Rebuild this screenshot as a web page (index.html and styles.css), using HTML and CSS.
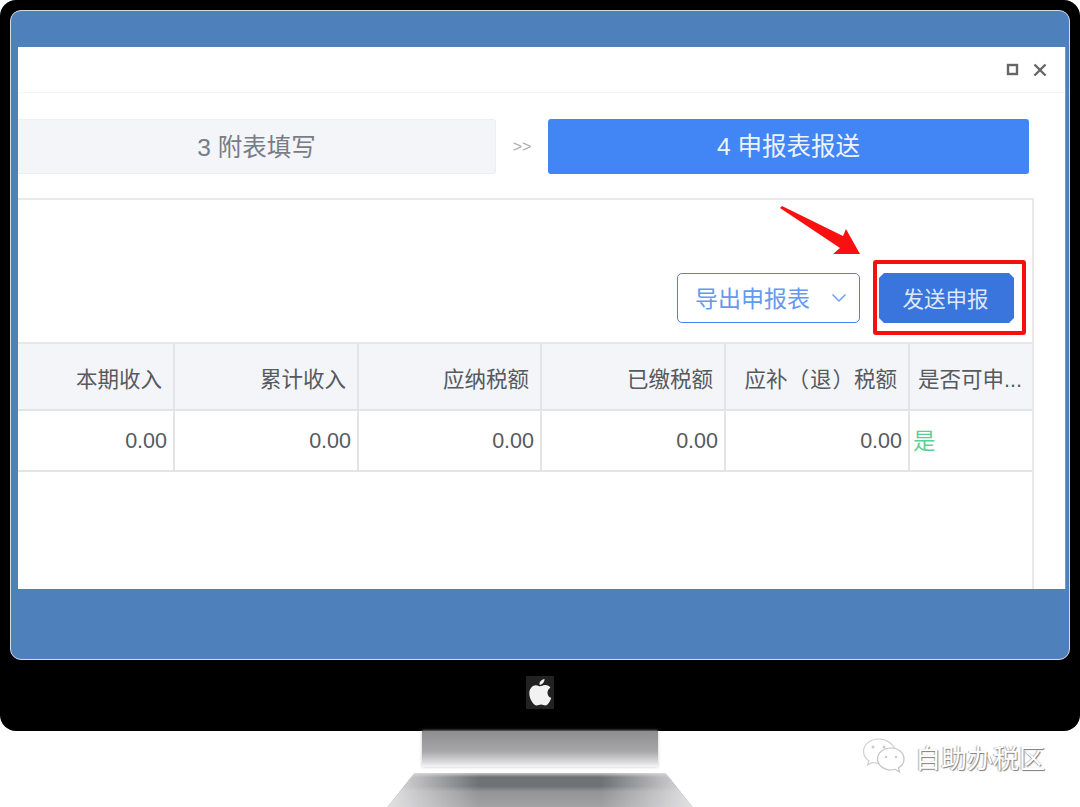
FILE: index.html
```html
<!DOCTYPE html>
<html lang="zh-CN">
<head>
    <meta charset="UTF-8">
    <meta name="viewport" content="width=device-width, initial-scale=1.0">
    <title>发送申报</title>
    <link rel="stylesheet" href="styles.css">
</head>
<body>
    <div class="monitor">
        <div class="screen">
            <div class="window">
                <div class="titlebar">
                    <svg class="win-icon" width="13" height="13" viewBox="0 0 13 13"><rect x="2" y="2" width="9" height="9" fill="none" stroke="#666" stroke-width="2.4"/></svg>
                    <svg class="win-icon" width="16" height="16" viewBox="0 0 16 16"><path d="M2.500 2.500l11 11M13.500 2.500l-11 11" fill="none" stroke="#666" stroke-width="2.4"/></svg>
                </div>
                <div class="steps">
                    <div class="step">3 附表填写</div>
                    <div class="step-sep">&gt;&gt;</div>
                    <div class="step active">4 申报表报送</div>
                </div>
                <div class="panel">
                    <div class="toolbar">
                        <button class="btn-export"><span>导出申报表</span>
                            <svg width="16" height="10" viewBox="0 0 16 10"><path d="M1.500 1.500L8 8l6.500-6.500" fill="none" stroke="#6f9ff5" stroke-width="1.500"/></svg>
                        </button>
                        <div class="send-wrap">
                            <button class="btn-send">发送申报</button>
                            <div class="highlight"></div>
                            <svg class="arrow" width="84" height="52" viewBox="0 0 84 52"><path d="M2 1L63 31 66 24 80 49 53 49 60 43 0 3z" fill="#fa1010"/></svg>
                        </div>
                    </div>
                    <div class="grid head">
                        <div>本期收入</div>
                        <div>累计收入</div>
                        <div>应纳税额</div>
                        <div>已缴税额</div>
                        <div>应补（<span class="paren">退</span>）税额</div>
                        <div>是否可申...</div>
                    </div>
                    <div class="grid row">
                        <div>0.00</div>
                        <div>0.00</div>
                        <div>0.00</div>
                        <div>0.00</div>
                        <div>0.00</div>
                        <div class="yes">是</div>
                    </div>
                </div>
            </div>
        </div>
        <div class="logo">
            <svg width="24" height="29" viewBox="0 0 24 29"><path d="M16.500 1c.2 3-2.300 6-5 5.800C11.200 4 13.700 1.400 16.500 1zM12 8.300c1.300 0 3-1.500 5.500-1.300 2 .1 3.800 1 4.900 2.700-4.300 2.600-3.600 8.700.9 10.400-1 2.800-3.300 7.400-5.900 7.400-1.600 0-2.500-1-4.300-1-1.900 0-2.900 1-4.400 1-3 0-7.400-6.400-7.400-12.300C1.300 10.500 4.600 7.200 7.800 7.200c1.800 0 3.300 1.100 4.200 1.100z" fill="#f2f2f2"/></svg>
        </div>
    </div>
    <div class="stand">
        <div class="neck"></div>
        <div class="base"></div>
    </div>
    <div class="watermark">
        <svg width="44" height="38" viewBox="0 0 44 38">
            <path d="M17 2C8 2 1.500 7.500 1.500 14.500c0 4 2 7 5.500 9.500l-1.500 4 5-2.500c2 .6 3.500.8 5.500.8M33 13C31 6.500 24.500 2 17 2" fill="#fff" stroke="#cfcfcf" stroke-width="1.200"/>
            <path d="M29 11c-7.500 0-13.500 5-13.500 11S21.500 33 29 33c1.500 0 3-.2 4.200-.7l4.300 2.700-1-4c3.500-2.200 5.500-5.300 5.500-9 0-6-5.500-11-13-11z" fill="#fff" stroke="#c4c4c4" stroke-width="1.200"/>
            <circle cx="11" cy="10" r="1.500" fill="#ccc"/><circle cx="22" cy="10" r="1.500" fill="#ccc"/>
            <circle cx="24" cy="20" r="1.300" fill="#ccc"/><circle cx="34" cy="20" r="1.300" fill="#ccc"/>
        </svg>
        <span>自助办税区</span>
    </div>
</body>
</html>
```

FILE: styles.css
```css
body {
    margin: 0;
    height: 807px;
    overflow: hidden;
    position: relative;
    background-color: white;
    font-family: "Liberation Sans", "Noto Sans CJK SC", sans-serif;
}
.monitor {
    height: 731px;
    box-sizing: border-box;
    padding: 10px 10px 0;
    background-color: black;
    border-radius: 16px;
}
.screen {
    height: 650px;
    box-sizing: border-box;
    padding: 36px 3px 70px 7px;
    background-color: #4e80bc;
    border: 1px solid #d5dbe3;
    border-radius: 11px;
}
.window {
    height: 100%;
    background-color: white;
    display: flex;
    flex-direction: column;
    border-right: 1px solid #8b99a8;
}
.titlebar {
    height: 45px;
    flex: none;
    display: flex;
    justify-content: flex-end;
    align-items: center;
    gap: 13px;
    padding-right: 17px;
    border-bottom: 1px solid #f3f4f6;
}
.steps {
    display: flex;
    align-items: center;
    margin-top: 26px;
    height: 55px;
    flex: none;
}
.step {
    width: 478px;
    height: 55px;
    line-height: 55px;
    text-align: center;
    font-size: 24.500px;
    color: #777c85;
    background-color: #f3f5f9;
    border: 1px solid #eceef2;
    border-left: none;
    box-sizing: border-box;
    border-radius: 0 3px 3px 0;
}
.step-sep {
    width: 52px;
    text-align: center;
    font-size: 16px;
    color: #a9adb3;
}
.step.active {
    width: 481px;
    color: #eef4fe;
    background-color: #4285f4;
    border: none;
    border-radius: 3px;
}
.panel {
    flex: 1;
    margin-top: 24px;
    width: 1016px;
    box-sizing: border-box;
    border-top: 2px solid #e8e9eb;
    border-right: 2px solid #e8e9eb;
}
.toolbar {
    height: 142px;
    box-sizing: border-box;
    padding-top: 73px;
    display: flex;
    justify-content: flex-end;
    align-items: flex-start;
    gap: 19px;
    padding-right: 18px;
}
.btn-export {
    width: 183px;
    height: 50px;
    box-sizing: border-box;
    padding: 0 12px 0 17px;
    display: flex;
    justify-content: space-between;
    align-items: center;
    font: inherit;
    font-size: 23px;
    color: #6399f3;
    background-color: white;
    border: 1px solid #4285f4;
    border-radius: 5px;
}
.btn-export span {
    margin-top: -3px;
}
.send-wrap {
    position: relative;
}
.btn-send {
    display: block;
    width: 135px;
    height: 50px;
    padding: 0 2px 2px 0;
    font: inherit;
    font-size: 21.500px;
    color: #dfe8f8;
    background-color: #3a75dd;
    border: none;
    clip-path: polygon(5px 0, 130px 0, 135px 5px, 135px 45px, 130px 50px, 5px 50px, 0 45px, 0 5px);
}
.highlight {
    position: absolute;
    left: -6px;
    top: -13px;
    width: 153px;
    height: 75px;
    box-sizing: border-box;
    border: 4px solid #f70f0f;
    border-radius: 3px;
}
.arrow {
    position: absolute;
    left: -99px;
    top: -68px;
}
.grid {
    display: grid;
    grid-template-columns: 157px 184px 183px 184px 184px 122px;
    border-top: 2px solid #e7e8ea;
    border-bottom: 2px solid #e3e4e6;
}
.grid div {
    border-right: 2px solid #e3e4e6;
    text-align: right;
    white-space: nowrap;
}
.grid div:last-child {
    border-right: none;
}
.head {
    height: 69px;
    box-sizing: border-box;
    font-size: 21.500px;
    color: #555a60;
    background-color: #f3f5f9;
}
.head div {
    height: 65px;
    line-height: 73px;
    padding-right: 11px;
}
.paren {
    margin: 0 1px;
}
.row {
    height: 61px;
    box-sizing: border-box;
    border-top: none;
    font-size: 21.500px;
    color: #555a60;
}
.row div {
    height: 59px;
    line-height: 61px;
    padding-right: 6px;
}
.row .yes {
    text-align: left;
    padding-left: 3px;
    font-size: 22.500px;
    color: #5ccf93;
}
.head div:last-child {
    text-align: left;
    padding-left: 8px;
    padding-right: 0;
}
.logo {
    width: 28px;
    height: 33px;
    margin: 16px auto 0;
    background-color: #222;
    display: flex;
    justify-content: center;
    align-items: center;
}
.stand {
    height: 76px;
    display: flex;
    flex-direction: column;
    align-items: center;
}
.neck {
    width: 236px;
    height: 36px;
    background: linear-gradient(#8e8e91, #a6a6a9 55%, #dcdcde 88%, #f6f6f6);
    box-shadow: 0 0 3px #c8c8ca;
}
.base {
    width: 306px;
    height: 35px;
    margin-top: 6px;
    background:
        linear-gradient(90deg, #e2e2e3 0, rgba(226, 226, 227, 0) 30%, rgba(226, 226, 227, 0) 70%, #e2e2e3 100%),
        linear-gradient(#c4c4c6 0, #707174 12%, #707174 38%, #949497 55%, #a2a2a4 100%);
    clip-path: polygon(28px 0, 278px 0, 306px 35px, 0 35px);
}
.watermark {
    position: absolute;
    left: 862px;
    top: 737px;
    display: flex;
    align-items: center;
    gap: 9px;
}
.watermark span {
    font-size: 26px;
    color: white;
    text-shadow: 1px 1px 1px #7d7d7d, -1px 0 1px #b0b0b0;
}
```
